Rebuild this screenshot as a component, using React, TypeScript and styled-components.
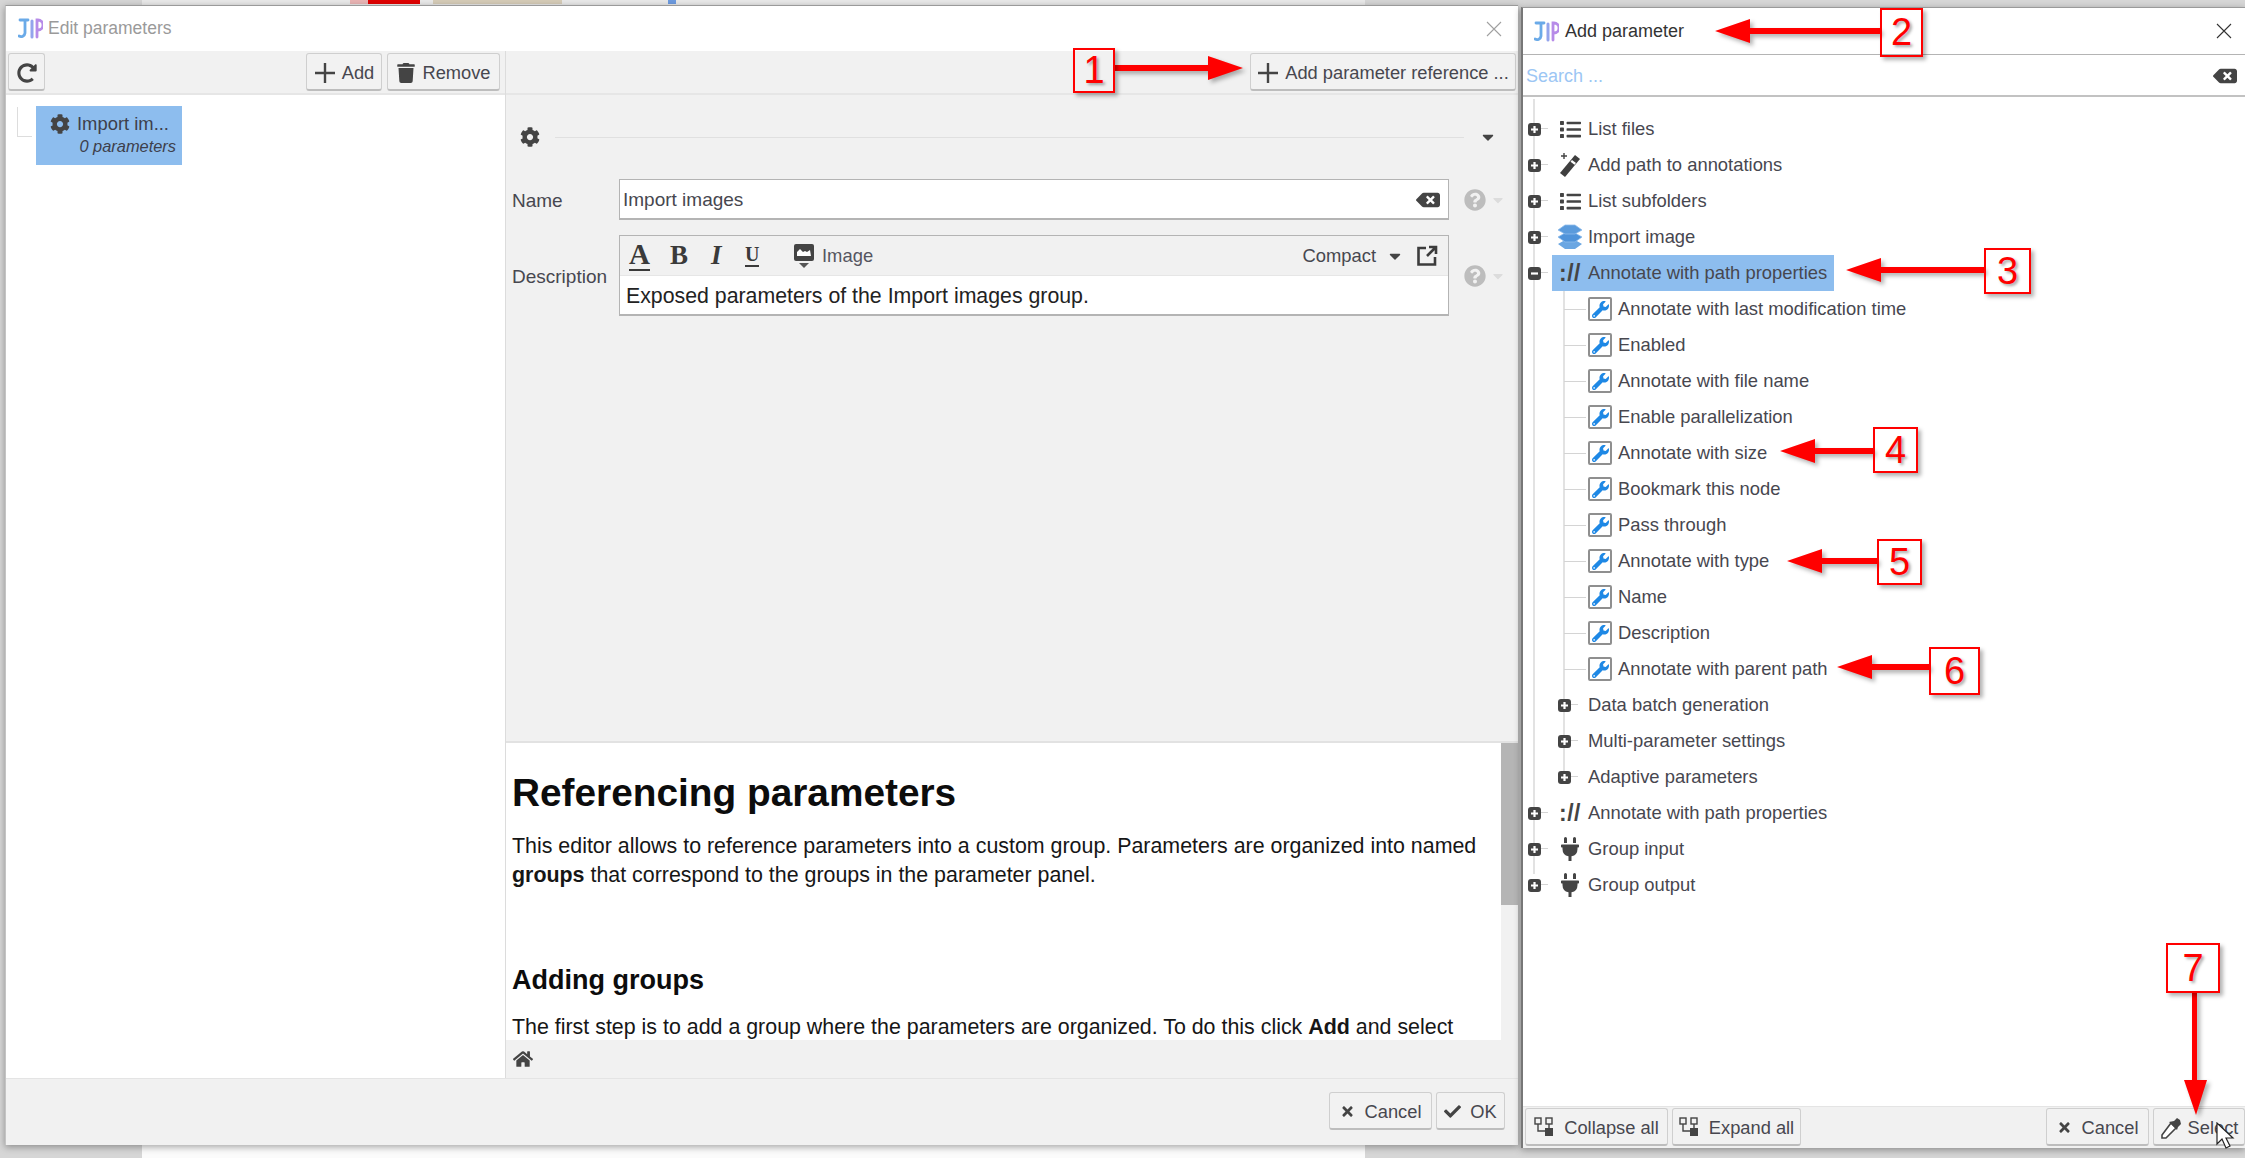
import React from "react";
import styled, { createGlobalStyle } from "styled-components";
import {
  FaCog, FaRedoAlt, FaTrash, FaBackspace, FaQuestionCircle, FaCaretDown, FaList,
  FaPlug, FaWrench, FaHome, FaTimes, FaCheck,
} from "react-icons/fa";

const Global = createGlobalStyle`
  html, body { margin: 0; padding: 0; background: #d6d6d6; overflow: hidden; }
  * { box-sizing: border-box; }
  body { font-family: "Liberation Sans", Arial, sans-serif; color: #47474f; }
`;

const Desktop = styled.div`
  position: relative;
  width: 2245px;
  height: 1158px;
  display: flex;
  align-items: flex-start;
  overflow: hidden;
`;
const Backdrop = styled.div`
  position: absolute;
  left: 142px;
  top: 0;
  width: 1223px;
  height: 1158px;
  background: linear-gradient(#e9e9e9 0 6px, #fbfbfb 6px);
`;
const BackChip = styled.div<{ $x: number; $w: number; $c: string }>`
  position: absolute;
  left: ${(p) => p.$x}px;
  top: 0;
  width: ${(p) => p.$w}px;
  height: 4px;
  background: ${(p) => p.$c};
`;

const Window = styled.div`
  position: relative;
  background: #fff;
  display: flex;
  flex-direction: column;
  border-top: 1px solid #9a9a9a;
  box-shadow: 0 2px 7px rgba(0, 0, 0, 0.35);
`;
const MainWindow = styled(Window)`
  margin: 5px 0 0 5px;
  width: 1513px;
  height: 1140px;
  border-left: 1px solid #c4c4c4;
`;
const SideWindow = styled(Window)`
  margin: 7px 0 0 3px;
  width: 724px;
  height: 1141px;
  border-left: 2px solid #777;
`;

const TitleBar = styled.div<{ $side?: boolean }>`
  display: flex;
  align-items: center;
  flex: none;
  height: ${(p) => (p.$side ? "47px" : "45px")};
  padding: ${(p) => (p.$side ? "0 13px 0 11px" : "0 16px 0 12px")};
  gap: ${(p) => (p.$side ? "6px" : "5px")};
  border-bottom: ${(p) => (p.$side ? "1px solid #b4b4b4" : "none")};
  font-size: ${(p) => (p.$side ? "18px" : "17.5px")};
  color: ${(p) => (p.$side ? "#333" : "#9a9a9a")};
`;
const TitleText = styled.span`
  flex: 1;
`;

const Logo = () => (
  <svg width="25" height="21" viewBox="0 0 25 21" fill="none" strokeLinecap="round">
    <path d="M2 2h8M7 2v13a4 4 0 0 1-6 3" stroke="#6aaae8" strokeWidth="2.8" />
    <path d="M14 3v16" stroke="#93a4ec" strokeWidth="3" />
    <path d="M19 19V2h1a4.500 4.500 0 0 1 0 10h-1" stroke="#b78be8" strokeWidth="2.8" />
  </svg>
);
const CloseX = ({ color }: { color: string }) => (
  <svg width="16" height="16" viewBox="0 0 16 16">
    <path d="M1 1l14 14M15 1L1 15" stroke={color} strokeWidth="1.1" fill="none" />
  </svg>
);
const PlusIcon = () => (
  <svg width="22" height="22" viewBox="0 0 22 22">
    <path d="M11 1v20M1 11h20" stroke="#444" strokeWidth="2.4" />
  </svg>
);
const TreeAllIcon = () => (
  <svg width="20" height="22" viewBox="0 0 20 22" fill="none">
    <rect x="1" y="1" width="6" height="6" stroke="#444" strokeWidth="1.4" />
    <rect x="12" y="1" width="6" height="6" stroke="#444" strokeWidth="1.4" />
    <path d="M4 7v7h8M15 7v4" stroke="#444" strokeWidth="1.4" />
    <rect x="11" y="11" width="8" height="8" fill="#444" />
  </svg>
);
const ImageIcon = () => (
  <svg width="22" height="26" viewBox="0 0 22 26">
    <path d="M3 1h16a2 2 0 0 1 2 2v13a2 2 0 0 1-2 2H3a2 2 0 0 1-2-2V3a2 2 0 0 1 2-2z" fill="#444" />
    <path d="M4 13V9l3-3 3 3 2-1 2 1 3-2 1 6z" fill="#fff" />
    <path d="M6 20h10l-5 5z" fill="#555" />
  </svg>
);
const PopOutIcon = () => (
  <svg width="22" height="22" viewBox="0 0 22 22" fill="none">
    <path d="M10 3H2.500v16.500H19V12" stroke="#3c3c3c" strokeWidth="2.6" />
    <path d="M13 2h7v7M20 2l-9 9" stroke="#3c3c3c" strokeWidth="2.6" />
  </svg>
);
const LayersIcon = () => (
  <svg width="24" height="26" viewBox="0 0 24 26">
    <path d="M0 20l7-4h10l7 4-7 5H7z" fill="#6aa6e2" />
    <path d="M0 13l7-4h10l7 4-7 5H7z" fill="#4f93da" stroke="#8fbcec" strokeWidth="0.8" />
    <path d="M0 6l7-5h10l7 5-7 4H7z" fill="#5b9bdc" stroke="#8fbcec" strokeWidth="0.8" />
  </svg>
);
const WandIcon = () => (
  <svg width="24" height="26" viewBox="0 0 24 26">
    <path d="M17 3l5 4L7 25l-5-4z" fill="#3f3f3f" />
    <path d="M14 8l4 3-1.500 1.800-4-3z" fill="#fff" />
    <path d="M6 1v6M3 4h6" stroke="#444" strokeWidth="1.4" />
  </svg>
);
const DropperIcon = () => (
  <svg width="22" height="24" viewBox="0 0 22 24" fill="none">
    <path d="M11 7l5 5-10 10H2v-3z" stroke="#444" strokeWidth="1.6" fill="#fff" />
    <path d="M9 6l8 8 1-3 3-3-1-4-3-2-3 3z" fill="#444" />
  </svg>
);

const Body = styled.div`
  flex: 1;
  min-height: 0;
  display: flex;
`;
const LeftPanel = styled.div`
  flex: none;
  width: 500px;
  display: flex;
  flex-direction: column;
  border-right: 1px solid #dcdcdc;
`;
const RightPanel = styled.div`
  flex: 1;
  min-width: 0;
  display: flex;
  flex-direction: column;
  background: #f1f1f1;
`;
const Toolbar = styled.div<{ $pr: number }>`
  flex: none;
  height: 44px;
  display: flex;
  align-items: flex-start;
  gap: 5px;
  padding: 2px ${(p) => p.$pr}px 0 2px;
  background: #f1f1f1;
  border-bottom: 2px solid #e6e6e6;
`;
const Spacer = styled.div`
  flex: 1;
`;
const Button = styled.button<{ $w?: number; $gap?: number }>`
  flex: none;
  height: 38px;
  width: ${(p) => (p.$w ? `${p.$w}px` : "auto")};
  display: inline-flex;
  align-items: center;
  justify-content: center;
  gap: ${(p) => p.$gap ?? 6}px;
  padding: 2px 0 0;
  background: #f2f2f2;
  border: 1px solid #cfcfcf;
  border-bottom: 2px solid #bdbdbd;
  border-radius: 3px;
  font-family: inherit;
  font-size: 18.3px;
  color: #47474f;
  white-space: nowrap;
  overflow: hidden;
  svg { flex: none; color: #444; }
`;

const ParamTree = styled.div`
  padding: 11px 0 0 11px;
  display: flex;
`;
const Elbow = styled.div`
  width: 15px;
  height: 30px;
  border-left: 1px solid #ddd;
  border-bottom: 1px solid #ddd;
  margin-top: 1px;
`;
const GroupNode = styled.div`
  margin-left: 4px;
  width: 146px;
  height: 59px;
  background: #8dbdee;
  padding: 7px 6px 0 14px;
  font-size: 18.4px;
  color: #3d3f4c;
`;
const GroupName = styled.div`
  display: flex;
  align-items: center;
  gap: 7px;
  white-space: nowrap;
`;
const GroupCount = styled.div`
  margin-top: 2px;
  text-align: right;
  font-size: 16.4px;
  font-style: italic;
  white-space: nowrap;
`;

const Form = styled.div`
  flex: 1;
  min-height: 0;
  border-bottom: 2px solid #e2e2e2;
`;
const SectionRow = styled.div`
  display: flex;
  align-items: center;
  height: 36px;
  margin-top: 24px;
  padding: 0 21px 0 14px;
`;
const SectionLine = styled.div`
  flex: none;
  width: 909px;
  height: 1px;
  margin-left: 15px;
  background: #e0e0e0;
`;
const SectionCaret = styled.div`
  flex: 1;
  display: flex;
  justify-content: flex-end;
`;
const Field = styled.div<{ $mt: number }>`
  display: grid;
  grid-template-columns: 107px 830px 1fr;
  align-items: center;
  margin-top: ${(p) => p.$mt}px;
  padding-left: 6px;
`;
const FieldLabel = styled.div`
  padding-top: 2px;
  font-size: 19px;
  color: #47474f;
`;
const TextBox = styled.div`
  height: 41px;
  display: flex;
  align-items: center;
  justify-content: space-between;
  padding: 2px 8px 0 3px;
  background: #fff;
  border: 1px solid #b4b4b4;
  border-bottom-width: 2px;
  font-size: 19px;
  color: #47474f;
`;
const FieldHelp = styled.div`
  display: flex;
  align-items: center;
  gap: 4px;
  padding-left: 15px;
  color: #bdbdbd;
  svg:last-child { color: #dcdcdc; }
`;
const Editor = styled.div`
  height: 81px;
  display: flex;
  flex-direction: column;
  background: #fff;
  border: 1px solid #b4b4b4;
  border-bottom-width: 2px;
`;
const EditorBar = styled.div`
  flex: none;
  height: 40px;
  display: flex;
  align-items: center;
  padding: 0 10px 0 9px;
  background: #f1f1f1;
  border-bottom: 1px solid #e6e6e6;
  font-size: 18.4px;
`;
const Glyph = styled.span<{ $w: number; $size: number; $italic?: boolean; $under?: boolean }>`
  flex: none;
  width: ${(p) => p.$w}px;
  font-family: "Liberation Serif", serif;
  font-weight: 700;
  font-size: ${(p) => p.$size}px;
  font-style: ${(p) => (p.$italic ? "italic" : "normal")};
  line-height: 1;
  color: #3a3a3a;
  span { display: inline-block; border-bottom: ${(p) => (p.$under ? "2px solid #3a3a3a" : "none")}; line-height: 0.98; }
`;
const ImageGroup = styled.span`
  display: flex;
  align-items: center;
  gap: 7px;
  margin-left: 28px;
  color: #55555f;
`;
const CompactLabel = styled.span`
  display: flex;
  align-items: center;
  gap: 10px;
  margin-right: 12px;
  color: #47474f;
`;
const EditorText = styled.div`
  flex: 1;
  padding: 8px 6px;
  font-size: 21.3px;
  color: #222;
`;

const Help = styled.div`
  flex: none;
  height: 297px;
  display: flex;
  background: #fff;
`;
const HelpScroll = styled.div`
  flex: 1;
  min-width: 0;
  overflow: hidden;
  padding: 0 6px;
  color: #161616;
`;
const H1 = styled.h1`
  margin: 28px 0 0;
  font-size: 38.8px;
  line-height: 44px;
  font-weight: 700;
  color: #0c0c0c;
`;
const P = styled.p`
  margin: 0;
  font-size: 21.4px;
  line-height: 29px;
`;
const Intro = styled(P)`
  margin-top: 17px;
`;
const H2 = styled.h2`
  margin: 72px 0 0;
  font-size: 27px;
  line-height: 36px;
  font-weight: 700;
  color: #0c0c0c;
`;
const Step = styled(P)`
  margin-top: 15px;
  white-space: nowrap;
`;
const Scrollbar = styled.div`
  flex: none;
  width: 17px;
  background: #f1f1f1;
`;
const Thumb = styled.div`
  height: 162px;
  background: #b5b5b5;
`;
const HomeBar = styled.div`
  flex: none;
  height: 38px;
  display: flex;
  align-items: center;
  padding-left: 7px;
  color: #444;
`;
const Footer = styled.div<{ $h: number }>`
  flex: none;
  height: ${(p) => p.$h}px;
  display: flex;
  background: #f1f1f1;
  border-top: 1px solid #e4e4e4;
`;
const MainFooter = styled(Footer)`
  align-items: center;
  gap: 4px;
  padding: 0 13px 2px 0;
`;
const SideFooter = styled(Footer)`
  align-items: flex-start;
  gap: 4px;
  padding: 1px 0 0 2px;
`;

const SearchBox = styled.div`
  flex: none;
  height: 42px;
  display: flex;
  align-items: center;
  justify-content: space-between;
  padding: 2px 8px 0 3px;
  border-bottom: 2px solid #c2c2c2;
  font-size: 18px;
  color: #9cc6f4;
`;

const Tree = styled.div`
  position: relative;
  flex: 1;
  min-height: 0;
  padding: 14px 0 0 0;
  &::before {
    content: "";
    position: absolute;
    left: 10px;
    top: 2px;
    bottom: 232px;
    width: 2px;
    background: #e2e2e2;
  }
`;
const ChildGroup = styled.div`
  position: relative;
  &::before {
    content: "";
    position: absolute;
    left: 40px;
    top: 0;
    bottom: 18px;
    width: 2px;
    background: #e2e2e2;
  }
`;
const Row = styled.div<{ $level: number }>`
  position: relative;
  display: flex;
  align-items: center;
  height: 36px;
  padding-left: ${(p) => p.$level * 30}px;
`;
const ToggleSlot = styled.div`
  position: relative;
  flex: none;
  width: 22px;
  height: 100%;
  display: flex;
  align-items: center;
  justify-content: center;
  &::after {
    content: "";
    position: absolute;
    left: 11px;
    top: 17px;
    width: 14px;
    height: 1px;
    background: #d4d4d4;
  }
  svg { position: relative; z-index: 1; }
`;
const Node = styled.div<{ $selected?: boolean }>`
  display: flex;
  align-items: center;
  height: 36px;
  margin-left: 7px;
  padding: 0 7px 0 6px;
  gap: 6px;
  background: ${(p) => (p.$selected ? "#8dbdee" : "transparent")};
  font-size: 18.4px;
  color: #47474f;
  white-space: nowrap;
`;
const IconSlot = styled.span`
  flex: none;
  width: 24px;
  display: flex;
  align-items: center;
  justify-content: center;
  color: #444;
`;
const ParamIcon = styled.span`
  flex: none;
  width: 24px;
  height: 24px;
  display: flex;
  align-items: center;
  justify-content: center;
  background: #fff;
  border: 2px solid #8f8f8f;
  border-radius: 2px;
  color: #1e88e5;
`;
const SchemeIcon = styled.span`
  font-weight: 700;
  font-size: 23px;
  letter-spacing: 0.5px;
  color: #444;
`;

const Callout = styled.div<{ $x: number; $y: number; $w: number; $h: number }>`
  position: absolute;
  left: ${(p) => p.$x}px;
  top: ${(p) => p.$y}px;
  width: ${(p) => p.$w}px;
  height: ${(p) => p.$h}px;
  display: flex;
  align-items: center;
  justify-content: center;
  border: 2px solid #f00;
  box-shadow: 3px 3px 4px rgba(0, 0, 0, 0.3);
  font-size: 38px;
  color: #f00;
  text-shadow: 2px 2px 3px rgba(0, 0, 0, 0.35);
`;
const ArrowLayer = styled.svg`
  position: absolute;
  left: 0;
  top: 0;
  pointer-events: none;
  filter: drop-shadow(3px 3px 2px rgba(0, 0, 0, 0.3));
`;
const CursorMark = styled.svg`
  position: absolute;
  left: 2216px;
  top: 1122px;
`;

const Toggle = ({ open }: { open?: boolean }) => (
  <svg width="13" height="13" viewBox="0 0 13 13">
    <rect x="0" y="0" width="13" height="13" rx="3" fill="#444" />
    <path d={open ? "M3 6.500h7" : "M3 6.500h7M6.500 3v7"} stroke="#fff" strokeWidth="2.2" />
  </svg>
);

const TreeNode = ({ level = 0, open, selected, icon, label }: {
  level?: number; open?: boolean; selected?: boolean; icon?: React.ReactNode; label: string;
}) => (
  <Row $level={level}>
    <ToggleSlot><Toggle open={open} /></ToggleSlot>
    <Node $selected={selected}>{icon && <IconSlot>{icon}</IconSlot>}{label}</Node>
  </Row>
);

const LeafStub = styled.div`
  flex: none;
  width: 22px;
  height: 1px;
  margin-left: 11px;
  margin-right: -11px;
  background: #d4d4d4;
`;
const LeafNode = ({ label }: { label: string }) => (
  <Row $level={1}>
    <LeafStub />
    <Node>
      <ParamIcon><FaWrench size={17} /></ParamIcon>
      {label}
    </Node>
  </Row>
);

const leaves = [
  "Annotate with last modification time", "Enabled", "Annotate with file name", "Enable parallelization",
  "Annotate with size", "Bookmark this node", "Pass through", "Annotate with type", "Name", "Description",
  "Annotate with parent path",
];
const callouts = [
  { n: 1, x: 1073, y: 48, w: 42, h: 45 },
  { n: 2, x: 1880, y: 8, w: 43, h: 49 },
  { n: 3, x: 1984, y: 248, w: 47, h: 46 },
  { n: 4, x: 1873, y: 427, w: 45, h: 46 },
  { n: 5, x: 1877, y: 539, w: 45, h: 46 },
  { n: 6, x: 1929, y: 647, w: 51, h: 48 },
  { n: 7, x: 2166, y: 943, w: 54, h: 50 },
];
const hArrows = [
  { from: 1115, to: 1243, y: 68 },
  { from: 1880, to: 1715, y: 31 },
  { from: 1984, to: 1846, y: 270 },
  { from: 1873, to: 1780, y: 451 },
  { from: 1877, to: 1787, y: 561 },
  { from: 1929, to: 1837, y: 667 },
];
const hArrowPath = (a: { from: number; to: number; y: number }) => {
  const d = a.to > a.from ? 1 : -1;
  const base = a.to - d * 35;
  return `M${a.from} ${a.y - 3}L${base} ${a.y - 3}L${base} ${a.y - 12}L${a.to} ${a.y}L${base} ${a.y + 12}L${base} ${a.y + 3}L${a.from} ${a.y + 3}Z`;
};

export default function App() {
  return (
    <Desktop>
      <Global />
      <Backdrop />
      <BackChip $x={350} $w={18} $c="#e9b4b4" />
      <BackChip $x={368} $w={52} $c="#e00000" />
      <BackChip $x={433} $w={129} $c="#d6ccb8" />
      <BackChip $x={668} $w={8} $c="#6d9be0" />

      <MainWindow>
        <TitleBar>
          <Logo />
          <TitleText>Edit parameters</TitleText>
          <CloseX color="#a0a0a0" />
        </TitleBar>
        <Body>
          <LeftPanel>
            <Toolbar $pr={5}>
              <Button $w={37}><FaRedoAlt size={20} /></Button>
              <Spacer />
              <Button $w={76}><PlusIcon />Add</Button>
              <Button $w={113}><FaTrash size={20} />Remove</Button>
            </Toolbar>
            <ParamTree>
              <Elbow />
              <GroupNode>
                <GroupName><FaCog size={20} color="#444" />Import im...</GroupName>
                <GroupCount>0 parameters</GroupCount>
              </GroupNode>
            </ParamTree>
          </LeftPanel>
          <RightPanel>
            <Toolbar $pr={2}>
              <Spacer />
              <Button $w={266}><PlusIcon />Add parameter reference ...</Button>
            </Toolbar>
            <Form>
              <SectionRow>
                <FaCog size={20} color="#444" />
                <SectionLine />
                <SectionCaret><FaCaretDown size={18} color="#444" /></SectionCaret>
              </SectionRow>
              <Field $mt={24}>
                <FieldLabel>Name</FieldLabel>
                <TextBox>Import images<FaBackspace size={24} color="#444" /></TextBox>
                <FieldHelp><FaQuestionCircle size={22} /><FaCaretDown size={16} /></FieldHelp>
              </Field>
              <Field $mt={15}>
                <FieldLabel>Description</FieldLabel>
                <Editor>
                  <EditorBar>
                    <Glyph $w={41} $size={29} $under><span>A</span></Glyph>
                    <Glyph $w={41} $size={27}>B</Glyph>
                    <Glyph $w={34} $size={27} $italic>I</Glyph>
                    <Glyph $w={20} $size={20} $under><span>U</span></Glyph>
                    <ImageGroup><ImageIcon />Image</ImageGroup>
                    <Spacer />
                    <CompactLabel>Compact<FaCaretDown size={18} color="#444" /></CompactLabel>
                    <PopOutIcon />
                  </EditorBar>
                  <EditorText>Exposed parameters of the Import images group.</EditorText>
                </Editor>
                <FieldHelp><FaQuestionCircle size={22} /><FaCaretDown size={16} /></FieldHelp>
              </Field>
            </Form>
            <Help>
              <HelpScroll>
                <H1>Referencing parameters</H1>
                <Intro>
                  This editor allows to reference parameters into a custom group. Parameters are organized into named{" "}
                  <b>groups</b> that correspond to the groups in the parameter panel.
                </Intro>
                <H2>Adding groups</H2>
                <Step>
                  The first step is to add a group where the parameters are organized. To do this click <b>Add</b> and select
                </Step>
              </HelpScroll>
              <Scrollbar><Thumb /></Scrollbar>
            </Help>
            <HomeBar><FaHome size={20} /></HomeBar>
          </RightPanel>
        </Body>
        <MainFooter $h={67}>
          <Spacer />
          <Button $w={103} $gap={10}><FaTimes size={15} />Cancel</Button>
          <Button $w={69} $gap={9}><FaCheck size={17} />OK</Button>
        </MainFooter>
      </MainWindow>

      <SideWindow>
        <TitleBar $side>
          <Logo />
          <TitleText>Add parameter</TitleText>
          <CloseX color="#333" />
        </TitleBar>
        <SearchBox>Search ...<FaBackspace size={24} color="#444" /></SearchBox>
        <Tree>
          <TreeNode icon={<FaList size={21} />} label="List files" />
          <TreeNode icon={<WandIcon />} label="Add path to annotations" />
          <TreeNode icon={<FaList size={21} />} label="List subfolders" />
          <TreeNode icon={<LayersIcon />} label="Import image" />
          <TreeNode open selected icon={<SchemeIcon>://</SchemeIcon>} label="Annotate with path properties" />
          <ChildGroup>
            {leaves.map((l) => <LeafNode key={l} label={l} />)}
            <TreeNode level={1} label="Data batch generation" />
            <TreeNode level={1} label="Multi-parameter settings" />
            <TreeNode level={1} label="Adaptive parameters" />
          </ChildGroup>
          <TreeNode icon={<SchemeIcon>://</SchemeIcon>} label="Annotate with path properties" />
          <TreeNode icon={<FaPlug size={24} />} label="Group input" />
          <TreeNode icon={<FaPlug size={24} />} label="Group output" />
        </Tree>
        <SideFooter $h={42}>
          <Button $w={143} $gap={10}><TreeAllIcon />Collapse all</Button>
          <Button $w={129} $gap={10}><TreeAllIcon />Expand all</Button>
          <Spacer />
          <Button $w={103} $gap={10}><FaTimes size={15} />Cancel</Button>
          <Button $w={92}><DropperIcon />Select</Button>
        </SideFooter>
      </SideWindow>

      <ArrowLayer width="2245" height="1158" viewBox="0 0 2245 1158">
        {hArrows.map((a) => <path key={a.from} d={hArrowPath(a)} fill="#f00" />)}
        <path d="M2192 993h5v87h10l-11 35-12-35h8z" fill="#f00" />
      </ArrowLayer>
      {callouts.map((c) => (
        <Callout key={c.n} $x={c.x} $y={c.y} $w={c.w} $h={c.h}>{c.n}</Callout>
      ))}
      <CursorMark width="20" height="28" viewBox="0 0 20 28">
        <path d="M1 1v21l5-5 4 9 4-2-4-8h7z" fill="#fff" stroke="#222" strokeWidth="1.2" />
      </CursorMark>
    </Desktop>
  );
}
